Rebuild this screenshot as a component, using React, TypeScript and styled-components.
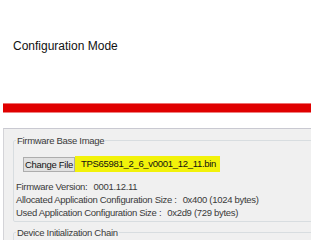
import * as React from "react"
import styled, {createGlobalStyle} from "styled-components"

const GlobalStyle = createGlobalStyle`
  html, body {
    margin: 0;
    padding: 0;
    background: #ffffff;
    overflow: hidden;
  }
  body {
    font-family: "Liberation Sans", Arial, sans-serif;
    color: #222222;
  }
`;

const Page = styled.div`
  width: 311px;
  height: 240px;
  overflow: hidden;
`;
const Header = styled.div`
  height: 103px;
  padding-left: 13px;
  box-sizing: border-box;
  padding-top: 39px;
`;
const Title = styled.div`
  font-size: 12px;
  line-height: 14px;
  color: #111111;
`;
const RedBar = styled.div`
  margin-left: 3px;
  height: 10px;
  box-sizing: border-box;
  background: #e00000;
  border-top: 1px solid #ee7070;
  border-bottom: 1px solid #ee8080;
`;
const Panel = styled.div`
  margin: 15px 0 0 3px;
  width: 340px;
  height: 140px;
  background: #f0f0f0;
  border-top: 1px solid #c9c9d1;
  border-left: 1px solid #d4d4d8;
  padding: 5px 0 0 9px;
  box-sizing: border-box;
`;
const Group = styled.fieldset`
  margin: 0 0 4px 0;
  padding: 9px 0 2px 2px;
  border: 1px solid #d8dde0;
  border-radius: 2px;
  font-size: 9.5px;
  line-height: 13px;
  letter-spacing: -0.3px;
`;
const Legend = styled.legend`
  padding: 0 1px;
  font-size: 9.5px;
  line-height: 13px;
  color: #3a3a3a;
`;
const FileRow = styled.div`
  display: flex;
  align-items: center;
  margin: 0 0 8px 7px;
  height: 16px;
`;
const Button = styled.button`
  font-family: inherit;
  font-size: 9.5px;
  letter-spacing: -0.3px;
  height: 15px;
  padding: 0 1px;
  background: #e1e1e1;
  border: 1px solid #adadad;
  color: #111111;
  line-height: 13px;
`;
const FileName = styled.span<{ $highlight?: boolean }>`
  height: 16px;
  line-height: 16px;
  padding: 0 4px 0 6px;
  background: ${p => (p.$highlight ? "#f2f20a" : "transparent")};
  color: #111111;
`;
const InfoLine = styled.div`
  color: #3a3a3a;
  white-space: nowrap;
`;
const Value = styled.span`
  margin-left: 6px;
`;

const info = [
  {label: "Firmware Version:", value: "0001.12.11"},
  {label: "Allocated Application Configuration Size :", value: "0x400 (1024 bytes)"},
  {label: "Used Application Configuration Size :", value: "0x2d9 (729 bytes)"},
]

const App = () => {
  return (
    <Page>
      <GlobalStyle />
      <Header>
        <Title>Configuration Mode</Title>
      </Header>
      <RedBar />
      <Panel>
        <Group>
          <Legend>Firmware Base Image</Legend>
          <FileRow>
            <Button>Change File</Button>
            <FileName $highlight>TPS65981_2_6_v0001_12_11.bin</FileName>
          </FileRow>
          {info.map(row => (
            <InfoLine key={row.label}>
              {row.label}
              <Value>{row.value}</Value>
            </InfoLine>
          ))}
        </Group>
        <Group>
          <Legend>Device Initialization Chain</Legend>
          <InfoLine>&nbsp;</InfoLine>
        </Group>
      </Panel>
    </Page>
  )
}

export default App;
